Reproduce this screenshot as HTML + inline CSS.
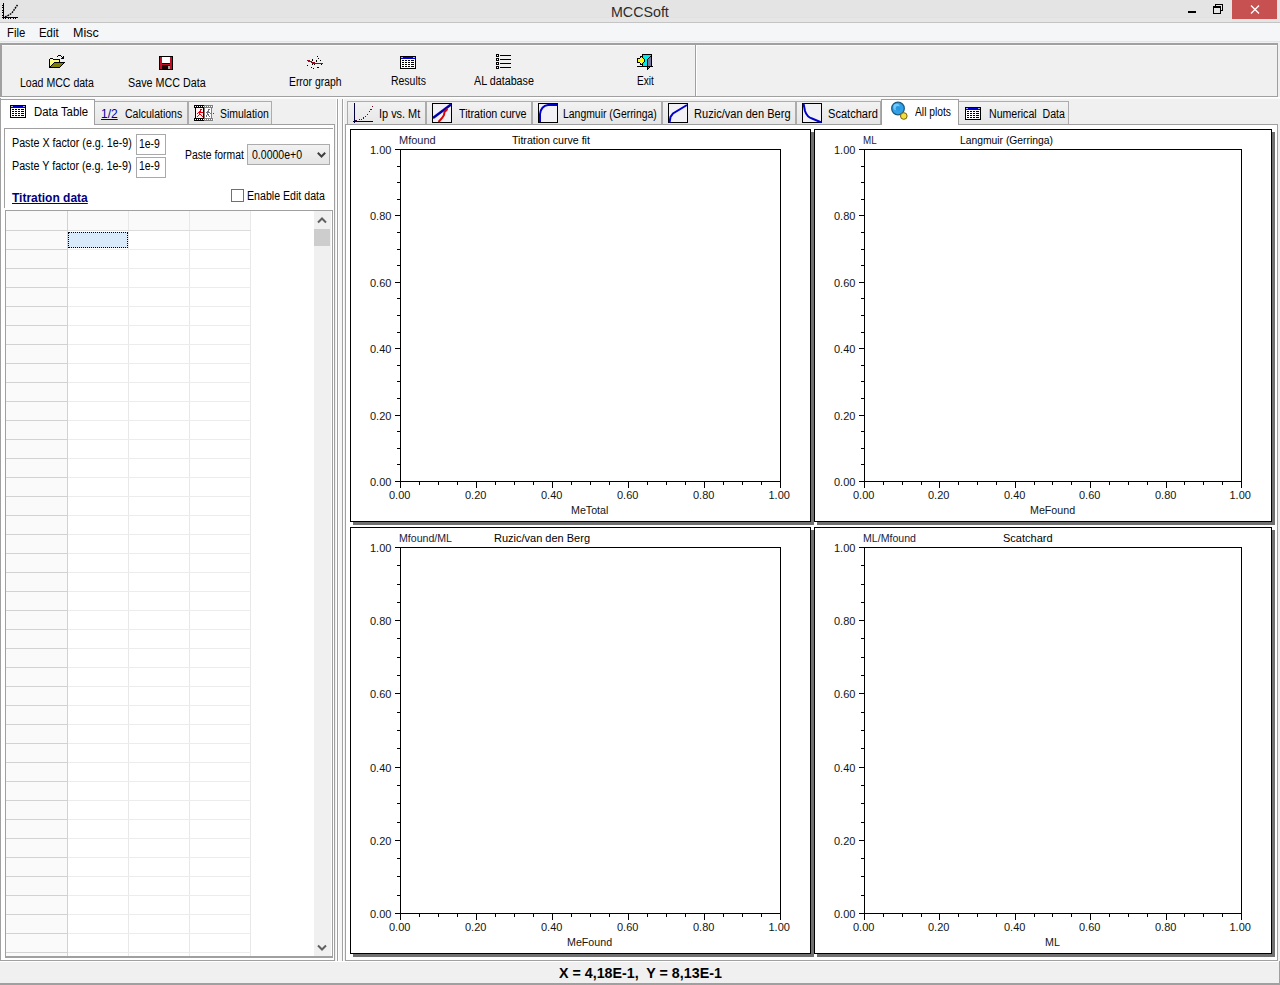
<!DOCTYPE html>
<html><head><meta charset="utf-8"><title>MCCSoft</title>
<style>
html,body{margin:0;padding:0;}
body{width:1280px;height:985px;position:relative;overflow:hidden;background:#f0f0f0;font-family:"Liberation Sans", sans-serif;}
body>div{position:absolute;line-height:20px;white-space:pre;transform-origin:0 0;}
body>svg{position:absolute;}
</style></head><body>
<div style="left:0px;top:0px;width:1280px;height:985px;background:#f0f0f0"></div>
<div style="left:0px;top:0px;width:1280px;height:22px;background:#e4e4e4"></div>
<div style="left:0px;top:17px;width:1232px;height:5px;background:#e6e6e6"></div>
<div style="left:0px;top:17px;width:1232px;height:1px;background:#e1e1e1"></div>
<div style="left:0px;top:22px;width:1280px;height:1px;background:#c4c4c4"></div>
<svg style="left:0px;top:0px" width="22" height="22" viewBox="0 0 22 22" shape-rendering="crispEdges"><rect x="3" y="3" width="1" height="15" fill="#000"/><rect x="3" y="17" width="15" height="1" fill="#000"/><rect x="2" y="5" width="1" height="1" fill="#000"/><rect x="2" y="7" width="1" height="1" fill="#000"/><rect x="2" y="10" width="1" height="1" fill="#000"/><rect x="2" y="12" width="1" height="1" fill="#000"/><rect x="2" y="15" width="1" height="1" fill="#000"/><rect x="2" y="17" width="1" height="1" fill="#000"/><rect x="3" y="18" width="1" height="1" fill="#000"/><rect x="5" y="18" width="1" height="1" fill="#000"/><rect x="8" y="18" width="1" height="1" fill="#000"/><rect x="10" y="18" width="1" height="1" fill="#000"/><rect x="13" y="18" width="1" height="1" fill="#000"/><rect x="15" y="18" width="1" height="1" fill="#000"/><path d="M5 17 L9 15 L12 13 L14 10 L16 7 L17.5 5" stroke="#000" stroke-width="1.4" stroke-dasharray="1.8 0.9" fill="none" shape-rendering="auto"/></svg>
<div style="left:611.05px;top:2px;font-size:15px;color:#2b2b2b;transform:scaleX(0.9500);">MCCSoft</div>
<div style="left:1188px;top:11px;width:8px;height:2px;background:#000"></div>
<svg style="left:1212px;top:3px" width="13" height="12" viewBox="0 0 13 12" shape-rendering="crispEdges"><rect x="3" y="1" width="8" height="1" fill="#000"/><rect x="10" y="1" width="1" height="7" fill="#000"/><rect x="9" y="7" width="2" height="1" fill="#000"/><rect x="1" y="3" width="8" height="2" fill="#000"/><rect x="1" y="3" width="1" height="8" fill="#000"/><rect x="8" y="3" width="1" height="8" fill="#000"/><rect x="1" y="10" width="8" height="1" fill="#000"/><rect x="3" y="1" width="1" height="2" fill="#000"/></svg>
<div style="left:1232px;top:0px;width:45px;height:19px;background:#c75050"></div>
<svg style="left:1250px;top:5px" width="10" height="9" viewBox="0 0 10 9"><path d="M1 0.5 L9 8.5 M9 0.5 L1 8.5" stroke="#fff" stroke-width="1.4" fill="none"/></svg>
<div style="left:0px;top:23px;width:1280px;height:18px;background:#f5f6f7"></div>
<div style="left:0px;top:41px;width:1280px;height:1px;background:#e4e4e4"></div>
<div style="left:0px;top:42px;width:1280px;height:1px;background:#f0f0f0"></div>
<div style="left:7.06px;top:23px;font-size:12px;color:#000;transform:scaleX(0.9444);">File</div>
<div style="left:39.05px;top:23px;font-size:12px;color:#000;transform:scaleX(0.9500);">Edit</div>
<div style="left:72.96px;top:23px;font-size:12px;color:#000;transform:scaleX(1.0435);">Misc</div>
<div style="left:0px;top:43px;width:1278px;height:2px;background:#a0a0a0"></div>
<div style="left:0px;top:43px;width:2px;height:54px;background:#a0a0a0"></div>
<div style="left:2px;top:45px;width:1275px;height:1px;background:#fbfbfb"></div>
<div style="left:0px;top:96px;width:1278px;height:1px;background:#a0a0a0"></div>
<div style="left:1277px;top:43px;width:1px;height:54px;background:#a0a0a0"></div>
<div style="left:695px;top:45px;width:1px;height:51px;background:#a0a0a0"></div>
<div style="left:696px;top:45px;width:1px;height:51px;background:#ffffff"></div>
<div style="left:0px;top:97px;width:1280px;height:1px;background:#ffffff"></div>
<div style="left:0px;top:98px;width:1280px;height:1px;background:#fafafa"></div>
<svg style="left:46px;top:52px" width="20" height="18" viewBox="0 0 20 18" shape-rendering="crispEdges"><path d="M4 7 L7 7 L7 8 L13 8 L13 10 L8 10 L4 14 Z" fill="#ffff80"/><path d="M8 10 L18 10 L14 15 L4 15 Z" fill="#808000"/><rect x="3" y="7" width="1" height="9" fill="#000"/><rect x="4" y="6" width="3" height="1" fill="#000"/><rect x="7" y="7" width="7" height="1" fill="#000"/><rect x="13" y="8" width="1" height="2" fill="#000"/><rect x="8" y="10" width="11" height="1" fill="#000"/><rect x="7" y="11" width="1" height="1" fill="#000"/><rect x="6" y="12" width="1" height="1" fill="#000"/><rect x="5" y="13" width="1" height="1" fill="#000"/><rect x="4" y="14" width="1" height="1" fill="#000"/><rect x="17" y="11" width="1" height="1" fill="#000"/><rect x="16" y="12" width="1" height="1" fill="#000"/><rect x="15" y="13" width="1" height="1" fill="#000"/><rect x="14" y="14" width="1" height="1" fill="#000"/><rect x="3" y="15" width="11" height="1" fill="#000"/><rect x="11" y="4" width="1" height="1" fill="#000"/><rect x="12" y="3" width="1" height="1" fill="#000"/><rect x="13" y="3" width="1" height="1" fill="#000"/><rect x="14" y="3" width="1" height="1" fill="#000"/><rect x="15" y="4" width="1" height="1" fill="#000"/><rect x="16" y="5" width="1" height="1" fill="#000"/><rect x="17" y="4" width="1" height="1" fill="#000"/><rect x="17" y="5" width="1" height="1" fill="#000"/><rect x="17" y="6" width="1" height="1" fill="#000"/><rect x="15" y="6" width="1" height="1" fill="#000"/><rect x="16" y="6" width="1" height="1" fill="#000"/></svg>
<svg style="left:159px;top:56px" width="14" height="14" viewBox="0 0 14 14" shape-rendering="crispEdges"><rect x="0" y="0" width="14" height="14" fill="#000"/><rect x="1" y="1" width="12" height="12" fill="#c01028"/><rect x="3" y="1" width="8" height="6" fill="#fff"/><rect x="3" y="7" width="8" height="1" fill="#000"/><rect x="3" y="9" width="8" height="4" fill="#200000"/><rect x="9" y="10" width="2" height="3" fill="#a0b0a0"/></svg>
<svg style="left:303px;top:52px" width="22" height="18" viewBox="0 0 22 18" shape-rendering="crispEdges"><rect x="4" y="8" width="3" height="1" fill="#b00020"/><rect x="5" y="9" width="4" height="1" fill="#b00020"/><rect x="8" y="10" width="4" height="1" fill="#900010"/><rect x="9" y="11" width="11" height="1" fill="#a00018"/><rect x="9" y="12" width="1" height="1" fill="#000"/><rect x="11" y="12" width="1" height="1" fill="#000"/><rect x="18" y="12" width="1" height="1" fill="#000"/><rect x="14" y="4" width="1" height="1" fill="#000"/><rect x="15" y="6" width="1" height="1" fill="#000"/><rect x="17" y="8" width="1" height="1" fill="#000"/><rect x="9" y="7" width="1" height="1" fill="#000"/><rect x="9" y="8" width="1" height="1" fill="#000"/><rect x="13" y="8" width="1" height="1" fill="#000"/><rect x="13" y="9" width="1" height="1" fill="#000"/><rect x="4" y="13" width="1" height="1" fill="#000"/><rect x="8" y="15" width="1" height="1" fill="#000"/><rect x="10" y="16" width="1" height="1" fill="#000"/><rect x="14" y="15" width="1" height="1" fill="#000"/><rect x="15" y="15" width="1" height="1" fill="#000"/></svg>
<svg style="left:400px;top:56px" width="16" height="13" viewBox="0 0 16 13" shape-rendering="crispEdges"><rect x="0" y="0" width="16" height="13" fill="#000"/><rect x="1" y="1" width="14" height="11" fill="#fff"/><rect x="1" y="1" width="14" height="2" fill="#0000d8"/><rect x="1" y="1" width="2" height="1" fill="#b0b0ff"/><rect x="13" y="1" width="2" height="1" fill="#b0b0ff"/><rect x="2" y="4" width="2" height="1" fill="#000"/><rect x="5" y="4" width="2" height="1" fill="#000"/><rect x="8" y="4" width="2" height="1" fill="#000"/><rect x="11" y="4" width="3" height="1" fill="#000"/><rect x="2" y="6" width="2" height="1" fill="#000"/><rect x="5" y="6" width="2" height="1" fill="#000"/><rect x="8" y="6" width="2" height="1" fill="#000"/><rect x="11" y="6" width="3" height="1" fill="#000"/><rect x="2" y="8" width="2" height="1" fill="#000"/><rect x="5" y="8" width="2" height="1" fill="#000"/><rect x="8" y="8" width="2" height="1" fill="#000"/><rect x="11" y="8" width="3" height="1" fill="#000"/><rect x="2" y="10" width="2" height="1" fill="#000"/><rect x="5" y="10" width="2" height="1" fill="#000"/><rect x="8" y="10" width="2" height="1" fill="#000"/><rect x="11" y="10" width="3" height="1" fill="#000"/></svg>
<svg style="left:496px;top:54px" width="15" height="15" viewBox="0 0 15 15" shape-rendering="crispEdges"><rect x="0" y="0" width="3" height="3" fill="#000"/><rect x="1" y="1" width="1" height="1" fill="#fff"/><rect x="4" y="1" width="11" height="1" fill="#000"/><rect x="0" y="4" width="3" height="3" fill="#000"/><rect x="1" y="5" width="1" height="1" fill="#fff"/><rect x="4" y="5" width="11" height="1" fill="#000"/><rect x="0" y="8" width="3" height="3" fill="#000"/><rect x="1" y="9" width="1" height="1" fill="#fff"/><rect x="4" y="9" width="11" height="1" fill="#000"/><rect x="0" y="12" width="3" height="3" fill="#000"/><rect x="1" y="13" width="1" height="1" fill="#fff"/><rect x="4" y="13" width="11" height="1" fill="#000"/></svg>
<svg style="left:637px;top:54px" width="17" height="17" viewBox="0 0 17 17" shape-rendering="crispEdges"><rect x="5" y="0" width="10" height="1" fill="#000"/><rect x="5" y="0" width="1" height="12" fill="#000"/><rect x="14" y="0" width="1" height="12" fill="#000"/><rect x="6" y="1" width="8" height="11" fill="#00e8e8"/><path d="M10 5 L14 1 L14 12 L10 15.5 Z" fill="#7878a0"/><rect x="10" y="5" width="1" height="1" fill="#000"/><rect x="11" y="4" width="1" height="1" fill="#000"/><rect x="12" y="3" width="1" height="1" fill="#000"/><rect x="13" y="2" width="1" height="1" fill="#000"/><rect x="10" y="6" width="1" height="1" fill="#000"/><rect x="10" y="7" width="1" height="1" fill="#000"/><rect x="10" y="8" width="1" height="1" fill="#000"/><rect x="10" y="9" width="1" height="1" fill="#000"/><rect x="10" y="10" width="1" height="1" fill="#000"/><rect x="10" y="11" width="1" height="1" fill="#000"/><rect x="10" y="12" width="1" height="1" fill="#000"/><rect x="10" y="13" width="1" height="1" fill="#000"/><rect x="10" y="14" width="1" height="1" fill="#000"/><rect x="10" y="15" width="1" height="1" fill="#000"/><rect x="11" y="14" width="1" height="1" fill="#000"/><rect x="12" y="13" width="1" height="1" fill="#000"/><rect x="13" y="12" width="1" height="1" fill="#000"/><rect x="0" y="12" width="16" height="1" fill="#000"/><rect x="1" y="5" width="3" height="3" fill="#ffff00"/><rect x="4" y="3" width="1" height="7" fill="#ffff00"/><rect x="5" y="4" width="1" height="5" fill="#ffff00"/><rect x="6" y="5" width="1" height="3" fill="#ffff00"/><rect x="0" y="4" width="3" height="1" fill="#000"/><rect x="0" y="8" width="3" height="1" fill="#000"/><rect x="0" y="4" width="1" height="5" fill="#000"/><rect x="3" y="2" width="1" height="2" fill="#000"/><rect x="3" y="9" width="1" height="2" fill="#000"/><rect x="4" y="2" width="1" height="1" fill="#000"/><rect x="5" y="3" width="1" height="1" fill="#000"/><rect x="6" y="4" width="1" height="1" fill="#000"/><rect x="7" y="5" width="1" height="1" fill="#000"/><rect x="7" y="6" width="1" height="1" fill="#000"/><rect x="7" y="7" width="1" height="1" fill="#000"/><rect x="6" y="8" width="1" height="1" fill="#000"/><rect x="5" y="9" width="1" height="1" fill="#000"/><rect x="4" y="10" width="1" height="1" fill="#000"/></svg>
<div style="left:20.12px;top:73px;font-size:12px;color:#000;transform:scaleX(0.8795);">Load MCC data</div>
<div style="left:128.10px;top:73px;font-size:12px;color:#000;transform:scaleX(0.8953);">Save MCC Data</div>
<div style="left:289.14px;top:72px;font-size:12px;color:#000;transform:scaleX(0.8644);">Error graph</div>
<div style="left:391.13px;top:71px;font-size:12px;color:#000;transform:scaleX(0.8718);">Results</div>
<div style="left:474.00px;top:71px;font-size:12px;color:#000;transform:scaleX(0.8955);">AL database</div>
<div style="left:637.16px;top:71px;font-size:12px;color:#000;transform:scaleX(0.8421);">Exit</div>
<div style="left:0px;top:98px;width:1px;height:863px;background:#a0a0a0"></div>
<div style="left:1px;top:125px;width:333px;height:835px;background:#ffffff"></div>
<div style="left:1px;top:124px;width:334px;height:1px;background:#a0a0a0"></div>
<div style="left:334px;top:124px;width:1px;height:837px;background:#a0a0a0"></div>
<div style="left:0px;top:960px;width:335px;height:1px;background:#a0a0a0"></div>
<div style="left:94px;top:101px;width:94px;height:23px;background:linear-gradient(#f3f3f3,#e6e6e6)"></div>
<div style="left:94px;top:101px;width:94px;height:1px;background:#acacac"></div>
<div style="left:94px;top:101px;width:1px;height:23px;background:#acacac"></div>
<div style="left:187px;top:101px;width:1px;height:23px;background:#acacac"></div>
<div style="left:188px;top:101px;width:84px;height:23px;background:linear-gradient(#f3f3f3,#e6e6e6)"></div>
<div style="left:188px;top:101px;width:84px;height:1px;background:#acacac"></div>
<div style="left:188px;top:101px;width:1px;height:23px;background:#acacac"></div>
<div style="left:271px;top:101px;width:1px;height:23px;background:#acacac"></div>
<div style="left:0px;top:99px;width:95px;height:26px;background:#ffffff"></div>
<div style="left:0px;top:99px;width:95px;height:1px;background:#a0a0a0"></div>
<div style="left:0px;top:99px;width:1px;height:26px;background:#a0a0a0"></div>
<div style="left:94px;top:99px;width:1px;height:26px;background:#a0a0a0"></div>
<div style="left:1px;top:124px;width:93px;height:1px;background:#ffffff"></div>
<svg style="left:10px;top:105px" width="16" height="13" viewBox="0 0 16 13" shape-rendering="crispEdges"><rect x="0" y="0" width="16" height="13" fill="#000"/><rect x="1" y="1" width="14" height="11" fill="#fff"/><rect x="1" y="1" width="14" height="2" fill="#0000d8"/><rect x="1" y="1" width="2" height="1" fill="#b0b0ff"/><rect x="13" y="1" width="2" height="1" fill="#b0b0ff"/><rect x="2" y="4" width="2" height="1" fill="#000"/><rect x="5" y="4" width="2" height="1" fill="#000"/><rect x="8" y="4" width="2" height="1" fill="#000"/><rect x="11" y="4" width="3" height="1" fill="#000"/><rect x="2" y="6" width="2" height="1" fill="#000"/><rect x="5" y="6" width="2" height="1" fill="#000"/><rect x="8" y="6" width="2" height="1" fill="#000"/><rect x="11" y="6" width="3" height="1" fill="#000"/><rect x="2" y="8" width="2" height="1" fill="#000"/><rect x="5" y="8" width="2" height="1" fill="#000"/><rect x="8" y="8" width="2" height="1" fill="#000"/><rect x="11" y="8" width="3" height="1" fill="#000"/><rect x="2" y="10" width="2" height="1" fill="#000"/><rect x="5" y="10" width="2" height="1" fill="#000"/><rect x="8" y="10" width="2" height="1" fill="#000"/><rect x="11" y="10" width="3" height="1" fill="#000"/></svg>
<div style="left:34.05px;top:102px;font-size:12px;color:#000;transform:scaleX(0.9464);">Data Table</div>
<div style="left:101.00px;top:104px;font-size:12px;color:#0000a0;"><u>1/2</u></div>
<div style="left:125.12px;top:104px;font-size:12px;color:#000;transform:scaleX(0.8750);">Calculations</div>
<svg style="left:194px;top:105px" width="20" height="16" viewBox="0 0 20 16" shape-rendering="crispEdges"><rect x="0" y="0" width="10" height="3" fill="#000"/><rect x="0" y="13" width="10" height="3" fill="#000"/><rect x="10" y="0" width="9" height="3" fill="#808080"/><rect x="10" y="13" width="9" height="3" fill="#808080"/><rect x="1" y="3" width="1" height="10" fill="#000"/><rect x="9" y="3" width="1" height="10" fill="#000"/><rect x="10" y="3" width="1" height="10" fill="#808080"/><rect x="17" y="3" width="1" height="10" fill="#808080"/><rect x="2" y="3" width="7" height="10" fill="#fff0f0"/><rect x="11" y="3" width="6" height="10" fill="#fff"/><rect x="1" y="1" width="1" height="1" fill="#fff"/><rect x="1" y="14" width="1" height="1" fill="#fff"/><rect x="3" y="1" width="1" height="1" fill="#fff"/><rect x="3" y="14" width="1" height="1" fill="#fff"/><rect x="5" y="1" width="1" height="1" fill="#fff"/><rect x="5" y="14" width="1" height="1" fill="#fff"/><rect x="7" y="1" width="1" height="1" fill="#fff"/><rect x="7" y="14" width="1" height="1" fill="#fff"/><rect x="9" y="1" width="1" height="1" fill="#fff"/><rect x="9" y="14" width="1" height="1" fill="#fff"/><rect x="11" y="1" width="1" height="1" fill="#fff"/><rect x="11" y="14" width="1" height="1" fill="#fff"/><rect x="13" y="1" width="1" height="1" fill="#fff"/><rect x="13" y="14" width="1" height="1" fill="#fff"/><rect x="15" y="1" width="1" height="1" fill="#fff"/><rect x="15" y="14" width="1" height="1" fill="#fff"/><rect x="17" y="1" width="1" height="1" fill="#fff"/><rect x="17" y="14" width="1" height="1" fill="#fff"/><rect x="19" y="1" width="1" height="1" fill="#fff"/><rect x="19" y="14" width="1" height="1" fill="#fff"/><rect x="6" y="4" width="1" height="1" fill="#e00010"/><rect x="7" y="4" width="1" height="1" fill="#e00010"/><rect x="6" y="5" width="1" height="1" fill="#e00010"/><rect x="5" y="6" width="1" height="1" fill="#e00010"/><rect x="6" y="6" width="1" height="1" fill="#e00010"/><rect x="4" y="7" width="1" height="1" fill="#e00010"/><rect x="5" y="7" width="1" height="1" fill="#e00010"/><rect x="6" y="7" width="1" height="1" fill="#e00010"/><rect x="7" y="7" width="1" height="1" fill="#e00010"/><rect x="3" y="8" width="1" height="1" fill="#e00010"/><rect x="5" y="8" width="1" height="1" fill="#e00010"/><rect x="8" y="7" width="1" height="1" fill="#e00010"/><rect x="5" y="9" width="1" height="1" fill="#e00010"/><rect x="6" y="9" width="1" height="1" fill="#e00010"/><rect x="4" y="10" width="1" height="1" fill="#e00010"/><rect x="7" y="10" width="1" height="1" fill="#e00010"/><rect x="3" y="11" width="1" height="1" fill="#e00010"/><rect x="8" y="11" width="1" height="1" fill="#e00010"/><rect x="14" y="4" width="1" height="1" fill="#707080"/><rect x="15" y="4" width="1" height="1" fill="#707080"/><rect x="14" y="5" width="1" height="1" fill="#707080"/><rect x="13" y="6" width="1" height="1" fill="#707080"/><rect x="14" y="6" width="1" height="1" fill="#707080"/><rect x="12" y="7" width="1" height="1" fill="#707080"/><rect x="13" y="7" width="1" height="1" fill="#707080"/><rect x="14" y="7" width="1" height="1" fill="#707080"/><rect x="15" y="7" width="1" height="1" fill="#707080"/><rect x="13" y="8" width="1" height="1" fill="#707080"/><rect x="16" y="8" width="1" height="1" fill="#707080"/><rect x="13" y="9" width="1" height="1" fill="#707080"/><rect x="14" y="9" width="1" height="1" fill="#707080"/><rect x="12" y="10" width="1" height="1" fill="#707080"/><rect x="14" y="10" width="1" height="1" fill="#707080"/><rect x="12" y="11" width="1" height="1" fill="#707080"/><rect x="15" y="11" width="1" height="1" fill="#707080"/><rect x="19" y="8" width="1" height="1" fill="#404040"/></svg>
<div style="left:220.13px;top:104px;font-size:12px;color:#000;transform:scaleX(0.8704);">Simulation</div>
<div style="left:4px;top:128px;width:329px;height:1px;background:#a0a0a0"></div>
<div style="left:4px;top:128px;width:1px;height:80px;background:#a0a0a0"></div>
<div style="left:12.11px;top:133px;font-size:12px;color:#000;transform:scaleX(0.8939);">Paste X factor (e.g. 1e-9)</div>
<div style="left:12.11px;top:156px;font-size:12px;color:#000;transform:scaleX(0.8939);">Paste Y factor (e.g. 1e-9)</div>
<div style="left:136px;top:134px;width:30px;height:21px;background:#fff;border:1px solid #a9a9a9;box-sizing:border-box"></div>
<div style="left:136px;top:157px;width:30px;height:21px;background:#fff;border:1px solid #a9a9a9;box-sizing:border-box"></div>
<div style="left:139.13px;top:134px;font-size:12px;color:#000;transform:scaleX(0.8696);">1e-9</div>
<div style="left:139.13px;top:156px;font-size:12px;color:#000;transform:scaleX(0.8696);">1e-9</div>
<div style="left:185.13px;top:145px;font-size:12px;color:#000;transform:scaleX(0.8657);">Paste format</div>
<div style="left:247px;top:144px;width:83px;height:21px;background:linear-gradient(#f2f2f2,#e5e5e5);border:1px solid #acacac;box-sizing:border-box"></div>
<div style="left:252.00px;top:145px;font-size:12px;color:#000;transform:scaleX(0.8772);">0.0000e+0</div>
<svg style="left:317px;top:152px" width="9" height="6" viewBox="0 0 9 6"><path d="M0.8 0.8 L4.5 4.5 L8.2 0.8" stroke="#404040" stroke-width="2" fill="none"/></svg>
<div style="left:231px;top:189px;width:13px;height:13px;background:#fff;border:1px solid #707070;box-sizing:border-box"></div>
<div style="left:247.11px;top:186px;font-size:12px;color:#000;transform:scaleX(0.8851);">Enable Edit data</div>
<div style="left:12.00px;top:188px;font-size:12px;font-weight:bold;color:#000080;text-decoration:underline;">Titration data</div>
<div style="left:5px;top:210px;width:328px;height:749px;background:#ffffff"></div>
<div style="left:5px;top:210px;width:328px;height:1px;background:#a0a0a0"></div>
<div style="left:5px;top:210px;width:1px;height:748px;background:#a0a0a0"></div>
<div style="left:5px;top:956px;width:328px;height:2px;background:#a0a0a0"></div>
<div style="left:332px;top:210px;width:1px;height:748px;background:#a0a0a0"></div>
<div style="left:6px;top:211px;width:245px;height:19px;background:#fafafa"></div>
<div style="left:6px;top:231px;width:61px;height:725px;background:#fafafa"></div>
<div style="left:128px;top:211px;width:1px;height:745px;background:#e8e8e8"></div>
<div style="left:189px;top:211px;width:1px;height:745px;background:#e8e8e8"></div>
<div style="left:250px;top:211px;width:1px;height:745px;background:#e8e8e8"></div>
<div style="left:68px;top:230px;width:183px;height:1px;background:#ececec"></div>
<div style="left:6px;top:230px;width:61px;height:1px;background:#d2d2d2"></div>
<div style="left:68px;top:249px;width:183px;height:1px;background:#ececec"></div>
<div style="left:6px;top:249px;width:61px;height:1px;background:#d2d2d2"></div>
<div style="left:68px;top:268px;width:183px;height:1px;background:#ececec"></div>
<div style="left:6px;top:268px;width:61px;height:1px;background:#d2d2d2"></div>
<div style="left:68px;top:287px;width:183px;height:1px;background:#ececec"></div>
<div style="left:6px;top:287px;width:61px;height:1px;background:#d2d2d2"></div>
<div style="left:68px;top:306px;width:183px;height:1px;background:#ececec"></div>
<div style="left:6px;top:306px;width:61px;height:1px;background:#d2d2d2"></div>
<div style="left:68px;top:325px;width:183px;height:1px;background:#ececec"></div>
<div style="left:6px;top:325px;width:61px;height:1px;background:#d2d2d2"></div>
<div style="left:68px;top:344px;width:183px;height:1px;background:#ececec"></div>
<div style="left:6px;top:344px;width:61px;height:1px;background:#d2d2d2"></div>
<div style="left:68px;top:363px;width:183px;height:1px;background:#ececec"></div>
<div style="left:6px;top:363px;width:61px;height:1px;background:#d2d2d2"></div>
<div style="left:68px;top:382px;width:183px;height:1px;background:#ececec"></div>
<div style="left:6px;top:382px;width:61px;height:1px;background:#d2d2d2"></div>
<div style="left:68px;top:401px;width:183px;height:1px;background:#ececec"></div>
<div style="left:6px;top:401px;width:61px;height:1px;background:#d2d2d2"></div>
<div style="left:68px;top:420px;width:183px;height:1px;background:#ececec"></div>
<div style="left:6px;top:420px;width:61px;height:1px;background:#d2d2d2"></div>
<div style="left:68px;top:439px;width:183px;height:1px;background:#ececec"></div>
<div style="left:6px;top:439px;width:61px;height:1px;background:#d2d2d2"></div>
<div style="left:68px;top:458px;width:183px;height:1px;background:#ececec"></div>
<div style="left:6px;top:458px;width:61px;height:1px;background:#d2d2d2"></div>
<div style="left:68px;top:477px;width:183px;height:1px;background:#ececec"></div>
<div style="left:6px;top:477px;width:61px;height:1px;background:#d2d2d2"></div>
<div style="left:68px;top:496px;width:183px;height:1px;background:#ececec"></div>
<div style="left:6px;top:496px;width:61px;height:1px;background:#d2d2d2"></div>
<div style="left:68px;top:515px;width:183px;height:1px;background:#ececec"></div>
<div style="left:6px;top:515px;width:61px;height:1px;background:#d2d2d2"></div>
<div style="left:68px;top:534px;width:183px;height:1px;background:#ececec"></div>
<div style="left:6px;top:534px;width:61px;height:1px;background:#d2d2d2"></div>
<div style="left:68px;top:553px;width:183px;height:1px;background:#ececec"></div>
<div style="left:6px;top:553px;width:61px;height:1px;background:#d2d2d2"></div>
<div style="left:68px;top:572px;width:183px;height:1px;background:#ececec"></div>
<div style="left:6px;top:572px;width:61px;height:1px;background:#d2d2d2"></div>
<div style="left:68px;top:591px;width:183px;height:1px;background:#ececec"></div>
<div style="left:6px;top:591px;width:61px;height:1px;background:#d2d2d2"></div>
<div style="left:68px;top:610px;width:183px;height:1px;background:#ececec"></div>
<div style="left:6px;top:610px;width:61px;height:1px;background:#d2d2d2"></div>
<div style="left:68px;top:629px;width:183px;height:1px;background:#ececec"></div>
<div style="left:6px;top:629px;width:61px;height:1px;background:#d2d2d2"></div>
<div style="left:68px;top:648px;width:183px;height:1px;background:#ececec"></div>
<div style="left:6px;top:648px;width:61px;height:1px;background:#d2d2d2"></div>
<div style="left:68px;top:667px;width:183px;height:1px;background:#ececec"></div>
<div style="left:6px;top:667px;width:61px;height:1px;background:#d2d2d2"></div>
<div style="left:68px;top:686px;width:183px;height:1px;background:#ececec"></div>
<div style="left:6px;top:686px;width:61px;height:1px;background:#d2d2d2"></div>
<div style="left:68px;top:705px;width:183px;height:1px;background:#ececec"></div>
<div style="left:6px;top:705px;width:61px;height:1px;background:#d2d2d2"></div>
<div style="left:68px;top:724px;width:183px;height:1px;background:#ececec"></div>
<div style="left:6px;top:724px;width:61px;height:1px;background:#d2d2d2"></div>
<div style="left:68px;top:743px;width:183px;height:1px;background:#ececec"></div>
<div style="left:6px;top:743px;width:61px;height:1px;background:#d2d2d2"></div>
<div style="left:68px;top:762px;width:183px;height:1px;background:#ececec"></div>
<div style="left:6px;top:762px;width:61px;height:1px;background:#d2d2d2"></div>
<div style="left:68px;top:781px;width:183px;height:1px;background:#ececec"></div>
<div style="left:6px;top:781px;width:61px;height:1px;background:#d2d2d2"></div>
<div style="left:68px;top:800px;width:183px;height:1px;background:#ececec"></div>
<div style="left:6px;top:800px;width:61px;height:1px;background:#d2d2d2"></div>
<div style="left:68px;top:819px;width:183px;height:1px;background:#ececec"></div>
<div style="left:6px;top:819px;width:61px;height:1px;background:#d2d2d2"></div>
<div style="left:68px;top:838px;width:183px;height:1px;background:#ececec"></div>
<div style="left:6px;top:838px;width:61px;height:1px;background:#d2d2d2"></div>
<div style="left:68px;top:857px;width:183px;height:1px;background:#ececec"></div>
<div style="left:6px;top:857px;width:61px;height:1px;background:#d2d2d2"></div>
<div style="left:68px;top:876px;width:183px;height:1px;background:#ececec"></div>
<div style="left:6px;top:876px;width:61px;height:1px;background:#d2d2d2"></div>
<div style="left:68px;top:895px;width:183px;height:1px;background:#ececec"></div>
<div style="left:6px;top:895px;width:61px;height:1px;background:#d2d2d2"></div>
<div style="left:68px;top:914px;width:183px;height:1px;background:#ececec"></div>
<div style="left:6px;top:914px;width:61px;height:1px;background:#d2d2d2"></div>
<div style="left:68px;top:933px;width:183px;height:1px;background:#ececec"></div>
<div style="left:6px;top:933px;width:61px;height:1px;background:#d2d2d2"></div>
<div style="left:68px;top:952px;width:183px;height:1px;background:#ececec"></div>
<div style="left:6px;top:952px;width:61px;height:1px;background:#d2d2d2"></div>
<div style="left:67px;top:211px;width:1px;height:745px;background:#d2d2d2"></div>
<div style="left:68px;top:230px;width:183px;height:1px;background:#dcdcdc"></div>
<div style="left:68px;top:232px;width:60px;height:16px;background:#d9ebfb;outline:1px dotted #000;outline-offset:-1px"></div>
<div style="left:314px;top:211px;width:17px;height:745px;background:#f0f0f0"></div>
<svg style="left:317px;top:217px" width="10" height="7" viewBox="0 0 10 7"><path d="M1 5.5 L5 1.5 L9 5.5" stroke="#606060" stroke-width="2" fill="none"/></svg>
<div style="left:314px;top:229px;width:16px;height:17px;background:#cdcdcd"></div>
<svg style="left:317px;top:944px" width="10" height="7" viewBox="0 0 10 7"><path d="M1 1.5 L5 5.5 L9 1.5" stroke="#606060" stroke-width="2" fill="none"/></svg>
<div style="left:335px;top:99px;width:10px;height:863px;background:#f0f0f0"></div>
<div style="left:336px;top:99px;width:1px;height:863px;background:#ffffff"></div>
<div style="left:338px;top:99px;width:1px;height:863px;background:#ffffff"></div>
<div style="left:339px;top:99px;width:3px;height:863px;background:#f7f7f7"></div>
<div style="left:343px;top:99px;width:1px;height:863px;background:#ffffff"></div>
<div style="left:337px;top:99px;width:1px;height:863px;background:#a0a0a0"></div>
<div style="left:342px;top:99px;width:1px;height:863px;background:#a0a0a0"></div>
<div style="left:346px;top:125px;width:931px;height:835px;background:#ffffff"></div>
<div style="left:345px;top:124px;width:933px;height:1px;background:#a0a0a0"></div>
<div style="left:345px;top:124px;width:1px;height:837px;background:#a0a0a0"></div>
<div style="left:1277px;top:124px;width:1px;height:837px;background:#a0a0a0"></div>
<div style="left:345px;top:960px;width:933px;height:1px;background:#a0a0a0"></div>
<div style="left:347px;top:101px;width:79px;height:23px;background:linear-gradient(#f3f3f3,#e6e6e6)"></div>
<div style="left:347px;top:101px;width:79px;height:1px;background:#acacac"></div>
<div style="left:347px;top:101px;width:1px;height:23px;background:#acacac"></div>
<div style="left:425px;top:101px;width:1px;height:23px;background:#acacac"></div>
<div style="left:426px;top:101px;width:106px;height:23px;background:linear-gradient(#f3f3f3,#e6e6e6)"></div>
<div style="left:426px;top:101px;width:106px;height:1px;background:#acacac"></div>
<div style="left:426px;top:101px;width:1px;height:23px;background:#acacac"></div>
<div style="left:531px;top:101px;width:1px;height:23px;background:#acacac"></div>
<div style="left:532px;top:101px;width:130px;height:23px;background:linear-gradient(#f3f3f3,#e6e6e6)"></div>
<div style="left:532px;top:101px;width:130px;height:1px;background:#acacac"></div>
<div style="left:532px;top:101px;width:1px;height:23px;background:#acacac"></div>
<div style="left:661px;top:101px;width:1px;height:23px;background:#acacac"></div>
<div style="left:662px;top:101px;width:134px;height:23px;background:linear-gradient(#f3f3f3,#e6e6e6)"></div>
<div style="left:662px;top:101px;width:134px;height:1px;background:#acacac"></div>
<div style="left:662px;top:101px;width:1px;height:23px;background:#acacac"></div>
<div style="left:795px;top:101px;width:1px;height:23px;background:#acacac"></div>
<div style="left:796px;top:101px;width:85px;height:23px;background:linear-gradient(#f3f3f3,#e6e6e6)"></div>
<div style="left:796px;top:101px;width:85px;height:1px;background:#acacac"></div>
<div style="left:796px;top:101px;width:1px;height:23px;background:#acacac"></div>
<div style="left:880px;top:101px;width:1px;height:23px;background:#acacac"></div>
<div style="left:958px;top:101px;width:111px;height:23px;background:linear-gradient(#f3f3f3,#e6e6e6)"></div>
<div style="left:958px;top:101px;width:111px;height:1px;background:#acacac"></div>
<div style="left:958px;top:101px;width:1px;height:23px;background:#acacac"></div>
<div style="left:1068px;top:101px;width:1px;height:23px;background:#acacac"></div>
<div style="left:881px;top:99px;width:78px;height:26px;background:#ffffff"></div>
<div style="left:881px;top:99px;width:78px;height:1px;background:#a0a0a0"></div>
<div style="left:881px;top:99px;width:1px;height:26px;background:#a0a0a0"></div>
<div style="left:958px;top:99px;width:1px;height:26px;background:#a0a0a0"></div>
<div style="left:882px;top:124px;width:76px;height:1px;background:#ffffff"></div>
<svg style="left:350px;top:101px" width="24" height="23" viewBox="0 0 24 23" shape-rendering="crispEdges"><rect x="4" y="2" width="1" height="20" fill="#000040"/><rect x="3" y="20" width="20" height="1" fill="#000040"/><rect x="5" y="19" width="2" height="1" fill="#400030"/><rect x="9" y="18" width="1" height="1" fill="#700020"/><rect x="11" y="18" width="1" height="1" fill="#700020"/><rect x="13" y="16" width="1" height="1" fill="#700020"/><rect x="13" y="17" width="1" height="1" fill="#700020"/><rect x="15" y="15" width="1" height="1" fill="#700020"/><rect x="17" y="13" width="1" height="1" fill="#700020"/><rect x="19" y="10" width="1" height="1" fill="#700020"/><rect x="20" y="8" width="1" height="1" fill="#700020"/><rect x="21" y="8" width="1" height="1" fill="#700020"/><rect x="22" y="5" width="1" height="1" fill="#700020"/></svg>
<div style="left:379.09px;top:104px;font-size:12px;color:#000;transform:scaleX(0.9091);">Ip vs. Mt</div>
<svg style="left:432px;top:103px" width="20" height="20" viewBox="0 0 20 20"><rect x="0.5" y="0.5" width="19" height="19" fill="#f2f2f6" stroke="#000"/><path d="M1 15 L19 1.5" stroke="#0000b0" stroke-width="2.5" fill="none"/><path d="M6.5 19 L10.5 14.5 L12 12 L12.5 9 L15.5 6" stroke="#e00000" stroke-width="2" fill="none"/></svg>
<div style="left:459.00px;top:104px;font-size:12px;color:#000;transform:scaleX(0.8933);">Titration curve</div>
<svg style="left:538px;top:103px" width="20" height="20" viewBox="0 0 20 20"><rect x="0.5" y="0.5" width="19" height="19" fill="#f2f2f6" stroke="#000"/><path d="M2 19 L2 11 Q3 3 10 2 L19 2" stroke="#0000d0" stroke-width="2" fill="none"/></svg>
<div style="left:563.13px;top:104px;font-size:12px;color:#000;transform:scaleX(0.8679);">Langmuir (Gerringa)</div>
<svg style="left:668px;top:103px" width="20" height="20" viewBox="0 0 20 20"><rect x="0.5" y="0.5" width="19" height="19" fill="#f2f2f6" stroke="#000"/><path d="M1.5 19.5 L2.5 14 L5 10.5 L19 2" stroke="#0000d0" stroke-width="2" fill="none"/></svg>
<div style="left:694.08px;top:104px;font-size:12px;color:#000;transform:scaleX(0.9223);">Ruzic/van den Berg</div>
<svg style="left:802px;top:103px" width="20" height="20" viewBox="0 0 20 20"><rect x="0.5" y="0.5" width="19" height="19" fill="#f2f2f6" stroke="#000"/><path d="M1.5 0.5 L3 8 Q5 14 10 15.5 L19.5 19.5" stroke="#0000d0" stroke-width="2" fill="none"/></svg>
<div style="left:828.08px;top:104px;font-size:12px;color:#000;transform:scaleX(0.9231);">Scatchard</div>
<svg style="left:886px;top:99px" width="24" height="24" viewBox="0 0 24 24"><circle cx="12" cy="9.5" r="6.3" fill="#30a0e8" stroke="#1a5a80" stroke-width="1.3"/><circle cx="10.5" cy="8" r="3.2" fill="#70c8ff"/><circle cx="12" cy="9.5" r="2.4" fill="#2898e0"/><circle cx="17.8" cy="17" r="3.3" fill="#f0e040" stroke="#806000" stroke-width="1"/></svg>
<div style="left:915.00px;top:102px;font-size:12px;color:#000;transform:scaleX(0.8571);">All plots</div>
<svg style="left:965px;top:107px" width="16" height="13" viewBox="0 0 16 13" shape-rendering="crispEdges"><rect x="0" y="0" width="16" height="13" fill="#000"/><rect x="1" y="1" width="14" height="11" fill="#fff"/><rect x="1" y="1" width="14" height="2" fill="#0000d8"/><rect x="1" y="1" width="2" height="1" fill="#b0b0ff"/><rect x="13" y="1" width="2" height="1" fill="#b0b0ff"/><rect x="2" y="4" width="2" height="1" fill="#000"/><rect x="5" y="4" width="2" height="1" fill="#000"/><rect x="8" y="4" width="2" height="1" fill="#000"/><rect x="11" y="4" width="3" height="1" fill="#000"/><rect x="2" y="6" width="2" height="1" fill="#000"/><rect x="5" y="6" width="2" height="1" fill="#000"/><rect x="8" y="6" width="2" height="1" fill="#000"/><rect x="11" y="6" width="3" height="1" fill="#000"/><rect x="2" y="8" width="2" height="1" fill="#000"/><rect x="5" y="8" width="2" height="1" fill="#000"/><rect x="8" y="8" width="2" height="1" fill="#000"/><rect x="11" y="8" width="3" height="1" fill="#000"/><rect x="2" y="10" width="2" height="1" fill="#000"/><rect x="5" y="10" width="2" height="1" fill="#000"/><rect x="8" y="10" width="2" height="1" fill="#000"/><rect x="11" y="10" width="3" height="1" fill="#000"/></svg>
<div style="left:989.12px;top:104px;font-size:12px;color:#000;transform:scaleX(0.8824);">Numerical  Data</div>
<div style="left:350px;top:129px;width:461px;height:393px;background:#000"></div>
<div style="left:351px;top:130px;width:459px;height:391px;background:#fff"></div>
<div style="left:811px;top:132px;width:3px;height:393px;background:#707070"></div>
<div style="left:353px;top:522px;width:461px;height:3px;background:#707070"></div>
<div style="left:395px;top:149px;width:386px;height:1px;background:#000"></div>
<div style="left:400px;top:149px;width:1px;height:339px;background:#000"></div>
<div style="left:780px;top:149px;width:1px;height:339px;background:#000"></div>
<div style="left:395px;top:481px;width:386px;height:1px;background:#000"></div>
<div style="left:400px;top:481px;width:1px;height:7px;background:#000"></div>
<div style="left:395px;top:481px;width:6px;height:1px;background:#000"></div>
<div style="left:419px;top:481px;width:1px;height:4px;background:#000"></div>
<div style="left:397px;top:464px;width:4px;height:1px;background:#000"></div>
<div style="left:438px;top:481px;width:1px;height:4px;background:#000"></div>
<div style="left:397px;top:448px;width:4px;height:1px;background:#000"></div>
<div style="left:457px;top:481px;width:1px;height:4px;background:#000"></div>
<div style="left:397px;top:431px;width:4px;height:1px;background:#000"></div>
<div style="left:476px;top:481px;width:1px;height:7px;background:#000"></div>
<div style="left:395px;top:415px;width:6px;height:1px;background:#000"></div>
<div style="left:495px;top:481px;width:1px;height:4px;background:#000"></div>
<div style="left:397px;top:398px;width:4px;height:1px;background:#000"></div>
<div style="left:514px;top:481px;width:1px;height:4px;background:#000"></div>
<div style="left:397px;top:381px;width:4px;height:1px;background:#000"></div>
<div style="left:533px;top:481px;width:1px;height:4px;background:#000"></div>
<div style="left:397px;top:365px;width:4px;height:1px;background:#000"></div>
<div style="left:552px;top:481px;width:1px;height:7px;background:#000"></div>
<div style="left:395px;top:348px;width:6px;height:1px;background:#000"></div>
<div style="left:571px;top:481px;width:1px;height:4px;background:#000"></div>
<div style="left:397px;top:332px;width:4px;height:1px;background:#000"></div>
<div style="left:590px;top:481px;width:1px;height:4px;background:#000"></div>
<div style="left:397px;top:315px;width:4px;height:1px;background:#000"></div>
<div style="left:609px;top:481px;width:1px;height:4px;background:#000"></div>
<div style="left:397px;top:298px;width:4px;height:1px;background:#000"></div>
<div style="left:628px;top:481px;width:1px;height:7px;background:#000"></div>
<div style="left:395px;top:282px;width:6px;height:1px;background:#000"></div>
<div style="left:647px;top:481px;width:1px;height:4px;background:#000"></div>
<div style="left:397px;top:265px;width:4px;height:1px;background:#000"></div>
<div style="left:666px;top:481px;width:1px;height:4px;background:#000"></div>
<div style="left:397px;top:249px;width:4px;height:1px;background:#000"></div>
<div style="left:685px;top:481px;width:1px;height:4px;background:#000"></div>
<div style="left:397px;top:232px;width:4px;height:1px;background:#000"></div>
<div style="left:704px;top:481px;width:1px;height:7px;background:#000"></div>
<div style="left:395px;top:215px;width:6px;height:1px;background:#000"></div>
<div style="left:723px;top:481px;width:1px;height:4px;background:#000"></div>
<div style="left:397px;top:199px;width:4px;height:1px;background:#000"></div>
<div style="left:742px;top:481px;width:1px;height:4px;background:#000"></div>
<div style="left:397px;top:182px;width:4px;height:1px;background:#000"></div>
<div style="left:761px;top:481px;width:1px;height:4px;background:#000"></div>
<div style="left:397px;top:166px;width:4px;height:1px;background:#000"></div>
<div style="left:780px;top:481px;width:1px;height:7px;background:#000"></div>
<div style="left:395px;top:149px;width:6px;height:1px;background:#000"></div>
<div style="left:389.00px;top:485px;font-size:11px;color:#141414;">0.00</div>
<div style="left:370.00px;top:472px;font-size:11px;color:#141414;">0.00</div>
<div style="left:465.00px;top:485px;font-size:11px;color:#141414;">0.20</div>
<div style="left:370.00px;top:406px;font-size:11px;color:#141414;">0.20</div>
<div style="left:541.00px;top:485px;font-size:11px;color:#141414;">0.40</div>
<div style="left:370.00px;top:339px;font-size:11px;color:#141414;">0.40</div>
<div style="left:617.00px;top:485px;font-size:11px;color:#141414;">0.60</div>
<div style="left:370.00px;top:273px;font-size:11px;color:#141414;">0.60</div>
<div style="left:693.00px;top:485px;font-size:11px;color:#141414;">0.80</div>
<div style="left:370.00px;top:206px;font-size:11px;color:#141414;">0.80</div>
<div style="left:768.50px;top:485px;font-size:11px;color:#141414;">1.00</div>
<div style="left:370.00px;top:140px;font-size:11px;color:#141414;">1.00</div>
<div style="left:399.00px;top:130px;font-size:11px;color:#1c1c3c;">Mfound</div>
<div style="left:512.00px;top:130px;font-size:11px;color:#000;transform:scaleX(0.9630);">Titration curve fit</div>
<div style="left:571.08px;top:500px;font-size:11px;color:#141414;transform:scaleX(0.9700);">MeTotal</div>
<div style="left:814px;top:129px;width:458px;height:393px;background:#000"></div>
<div style="left:815px;top:130px;width:456px;height:391px;background:#fff"></div>
<div style="left:1272px;top:132px;width:3px;height:393px;background:#707070"></div>
<div style="left:817px;top:522px;width:458px;height:3px;background:#707070"></div>
<div style="left:859px;top:149px;width:383px;height:1px;background:#000"></div>
<div style="left:864px;top:149px;width:1px;height:339px;background:#000"></div>
<div style="left:1241px;top:149px;width:1px;height:339px;background:#000"></div>
<div style="left:859px;top:481px;width:383px;height:1px;background:#000"></div>
<div style="left:864px;top:481px;width:1px;height:7px;background:#000"></div>
<div style="left:859px;top:481px;width:6px;height:1px;background:#000"></div>
<div style="left:883px;top:481px;width:1px;height:4px;background:#000"></div>
<div style="left:861px;top:464px;width:4px;height:1px;background:#000"></div>
<div style="left:902px;top:481px;width:1px;height:4px;background:#000"></div>
<div style="left:861px;top:448px;width:4px;height:1px;background:#000"></div>
<div style="left:921px;top:481px;width:1px;height:4px;background:#000"></div>
<div style="left:861px;top:431px;width:4px;height:1px;background:#000"></div>
<div style="left:939px;top:481px;width:1px;height:7px;background:#000"></div>
<div style="left:859px;top:415px;width:6px;height:1px;background:#000"></div>
<div style="left:958px;top:481px;width:1px;height:4px;background:#000"></div>
<div style="left:861px;top:398px;width:4px;height:1px;background:#000"></div>
<div style="left:977px;top:481px;width:1px;height:4px;background:#000"></div>
<div style="left:861px;top:381px;width:4px;height:1px;background:#000"></div>
<div style="left:996px;top:481px;width:1px;height:4px;background:#000"></div>
<div style="left:861px;top:365px;width:4px;height:1px;background:#000"></div>
<div style="left:1015px;top:481px;width:1px;height:7px;background:#000"></div>
<div style="left:859px;top:348px;width:6px;height:1px;background:#000"></div>
<div style="left:1034px;top:481px;width:1px;height:4px;background:#000"></div>
<div style="left:861px;top:332px;width:4px;height:1px;background:#000"></div>
<div style="left:1052px;top:481px;width:1px;height:4px;background:#000"></div>
<div style="left:861px;top:315px;width:4px;height:1px;background:#000"></div>
<div style="left:1071px;top:481px;width:1px;height:4px;background:#000"></div>
<div style="left:861px;top:298px;width:4px;height:1px;background:#000"></div>
<div style="left:1090px;top:481px;width:1px;height:7px;background:#000"></div>
<div style="left:859px;top:282px;width:6px;height:1px;background:#000"></div>
<div style="left:1109px;top:481px;width:1px;height:4px;background:#000"></div>
<div style="left:861px;top:265px;width:4px;height:1px;background:#000"></div>
<div style="left:1128px;top:481px;width:1px;height:4px;background:#000"></div>
<div style="left:861px;top:249px;width:4px;height:1px;background:#000"></div>
<div style="left:1147px;top:481px;width:1px;height:4px;background:#000"></div>
<div style="left:861px;top:232px;width:4px;height:1px;background:#000"></div>
<div style="left:1166px;top:481px;width:1px;height:7px;background:#000"></div>
<div style="left:859px;top:215px;width:6px;height:1px;background:#000"></div>
<div style="left:1184px;top:481px;width:1px;height:4px;background:#000"></div>
<div style="left:861px;top:199px;width:4px;height:1px;background:#000"></div>
<div style="left:1203px;top:481px;width:1px;height:4px;background:#000"></div>
<div style="left:861px;top:182px;width:4px;height:1px;background:#000"></div>
<div style="left:1222px;top:481px;width:1px;height:4px;background:#000"></div>
<div style="left:861px;top:166px;width:4px;height:1px;background:#000"></div>
<div style="left:1241px;top:481px;width:1px;height:7px;background:#000"></div>
<div style="left:859px;top:149px;width:6px;height:1px;background:#000"></div>
<div style="left:853.00px;top:485px;font-size:11px;color:#141414;">0.00</div>
<div style="left:834.00px;top:472px;font-size:11px;color:#141414;">0.00</div>
<div style="left:928.00px;top:485px;font-size:11px;color:#141414;">0.20</div>
<div style="left:834.00px;top:406px;font-size:11px;color:#141414;">0.20</div>
<div style="left:1004.00px;top:485px;font-size:11px;color:#141414;">0.40</div>
<div style="left:834.00px;top:339px;font-size:11px;color:#141414;">0.40</div>
<div style="left:1079.00px;top:485px;font-size:11px;color:#141414;">0.60</div>
<div style="left:834.00px;top:273px;font-size:11px;color:#141414;">0.60</div>
<div style="left:1155.00px;top:485px;font-size:11px;color:#141414;">0.80</div>
<div style="left:834.00px;top:206px;font-size:11px;color:#141414;">0.80</div>
<div style="left:1229.50px;top:485px;font-size:11px;color:#141414;">1.00</div>
<div style="left:834.00px;top:140px;font-size:11px;color:#141414;">1.00</div>
<div style="left:863.11px;top:130px;font-size:11px;color:#1c1c3c;transform:scaleX(0.8929);">ML</div>
<div style="left:960.06px;top:130px;font-size:11px;color:#000;transform:scaleX(0.9381);">Langmuir (Gerringa)</div>
<div style="left:1029.70px;top:500px;font-size:11px;color:#141414;transform:scaleX(0.9700);">MeFound</div>
<div style="left:350px;top:527px;width:461px;height:427px;background:#000"></div>
<div style="left:351px;top:528px;width:459px;height:425px;background:#fff"></div>
<div style="left:811px;top:530px;width:3px;height:427px;background:#707070"></div>
<div style="left:353px;top:954px;width:461px;height:3px;background:#707070"></div>
<div style="left:395px;top:547px;width:386px;height:1px;background:#000"></div>
<div style="left:400px;top:547px;width:1px;height:373px;background:#000"></div>
<div style="left:780px;top:547px;width:1px;height:373px;background:#000"></div>
<div style="left:395px;top:913px;width:386px;height:1px;background:#000"></div>
<div style="left:400px;top:913px;width:1px;height:7px;background:#000"></div>
<div style="left:395px;top:913px;width:6px;height:1px;background:#000"></div>
<div style="left:419px;top:913px;width:1px;height:4px;background:#000"></div>
<div style="left:397px;top:895px;width:4px;height:1px;background:#000"></div>
<div style="left:438px;top:913px;width:1px;height:4px;background:#000"></div>
<div style="left:397px;top:876px;width:4px;height:1px;background:#000"></div>
<div style="left:457px;top:913px;width:1px;height:4px;background:#000"></div>
<div style="left:397px;top:858px;width:4px;height:1px;background:#000"></div>
<div style="left:476px;top:913px;width:1px;height:7px;background:#000"></div>
<div style="left:395px;top:840px;width:6px;height:1px;background:#000"></div>
<div style="left:495px;top:913px;width:1px;height:4px;background:#000"></div>
<div style="left:397px;top:822px;width:4px;height:1px;background:#000"></div>
<div style="left:514px;top:913px;width:1px;height:4px;background:#000"></div>
<div style="left:397px;top:803px;width:4px;height:1px;background:#000"></div>
<div style="left:533px;top:913px;width:1px;height:4px;background:#000"></div>
<div style="left:397px;top:785px;width:4px;height:1px;background:#000"></div>
<div style="left:552px;top:913px;width:1px;height:7px;background:#000"></div>
<div style="left:395px;top:767px;width:6px;height:1px;background:#000"></div>
<div style="left:571px;top:913px;width:1px;height:4px;background:#000"></div>
<div style="left:397px;top:748px;width:4px;height:1px;background:#000"></div>
<div style="left:590px;top:913px;width:1px;height:4px;background:#000"></div>
<div style="left:397px;top:730px;width:4px;height:1px;background:#000"></div>
<div style="left:609px;top:913px;width:1px;height:4px;background:#000"></div>
<div style="left:397px;top:712px;width:4px;height:1px;background:#000"></div>
<div style="left:628px;top:913px;width:1px;height:7px;background:#000"></div>
<div style="left:395px;top:693px;width:6px;height:1px;background:#000"></div>
<div style="left:647px;top:913px;width:1px;height:4px;background:#000"></div>
<div style="left:397px;top:675px;width:4px;height:1px;background:#000"></div>
<div style="left:666px;top:913px;width:1px;height:4px;background:#000"></div>
<div style="left:397px;top:657px;width:4px;height:1px;background:#000"></div>
<div style="left:685px;top:913px;width:1px;height:4px;background:#000"></div>
<div style="left:397px;top:638px;width:4px;height:1px;background:#000"></div>
<div style="left:704px;top:913px;width:1px;height:7px;background:#000"></div>
<div style="left:395px;top:620px;width:6px;height:1px;background:#000"></div>
<div style="left:723px;top:913px;width:1px;height:4px;background:#000"></div>
<div style="left:397px;top:602px;width:4px;height:1px;background:#000"></div>
<div style="left:742px;top:913px;width:1px;height:4px;background:#000"></div>
<div style="left:397px;top:584px;width:4px;height:1px;background:#000"></div>
<div style="left:761px;top:913px;width:1px;height:4px;background:#000"></div>
<div style="left:397px;top:565px;width:4px;height:1px;background:#000"></div>
<div style="left:780px;top:913px;width:1px;height:7px;background:#000"></div>
<div style="left:395px;top:547px;width:6px;height:1px;background:#000"></div>
<div style="left:389.00px;top:917px;font-size:11px;color:#141414;">0.00</div>
<div style="left:370.00px;top:904px;font-size:11px;color:#141414;">0.00</div>
<div style="left:465.00px;top:917px;font-size:11px;color:#141414;">0.20</div>
<div style="left:370.00px;top:831px;font-size:11px;color:#141414;">0.20</div>
<div style="left:541.00px;top:917px;font-size:11px;color:#141414;">0.40</div>
<div style="left:370.00px;top:758px;font-size:11px;color:#141414;">0.40</div>
<div style="left:617.00px;top:917px;font-size:11px;color:#141414;">0.60</div>
<div style="left:370.00px;top:684px;font-size:11px;color:#141414;">0.60</div>
<div style="left:693.00px;top:917px;font-size:11px;color:#141414;">0.80</div>
<div style="left:370.00px;top:611px;font-size:11px;color:#141414;">0.80</div>
<div style="left:768.50px;top:917px;font-size:11px;color:#141414;">1.00</div>
<div style="left:370.00px;top:538px;font-size:11px;color:#141414;">1.00</div>
<div style="left:399.04px;top:528px;font-size:11px;color:#1c1c3c;transform:scaleX(0.9630);">Mfound/ML</div>
<div style="left:494.00px;top:528px;font-size:11px;color:#000;">Ruzic/van den Berg</div>
<div style="left:567.20px;top:932px;font-size:11px;color:#141414;transform:scaleX(0.9700);">MeFound</div>
<div style="left:814px;top:527px;width:458px;height:427px;background:#000"></div>
<div style="left:815px;top:528px;width:456px;height:425px;background:#fff"></div>
<div style="left:1272px;top:530px;width:3px;height:427px;background:#707070"></div>
<div style="left:817px;top:954px;width:458px;height:3px;background:#707070"></div>
<div style="left:859px;top:547px;width:383px;height:1px;background:#000"></div>
<div style="left:864px;top:547px;width:1px;height:373px;background:#000"></div>
<div style="left:1241px;top:547px;width:1px;height:373px;background:#000"></div>
<div style="left:859px;top:913px;width:383px;height:1px;background:#000"></div>
<div style="left:864px;top:913px;width:1px;height:7px;background:#000"></div>
<div style="left:859px;top:913px;width:6px;height:1px;background:#000"></div>
<div style="left:883px;top:913px;width:1px;height:4px;background:#000"></div>
<div style="left:861px;top:895px;width:4px;height:1px;background:#000"></div>
<div style="left:902px;top:913px;width:1px;height:4px;background:#000"></div>
<div style="left:861px;top:876px;width:4px;height:1px;background:#000"></div>
<div style="left:921px;top:913px;width:1px;height:4px;background:#000"></div>
<div style="left:861px;top:858px;width:4px;height:1px;background:#000"></div>
<div style="left:939px;top:913px;width:1px;height:7px;background:#000"></div>
<div style="left:859px;top:840px;width:6px;height:1px;background:#000"></div>
<div style="left:958px;top:913px;width:1px;height:4px;background:#000"></div>
<div style="left:861px;top:822px;width:4px;height:1px;background:#000"></div>
<div style="left:977px;top:913px;width:1px;height:4px;background:#000"></div>
<div style="left:861px;top:803px;width:4px;height:1px;background:#000"></div>
<div style="left:996px;top:913px;width:1px;height:4px;background:#000"></div>
<div style="left:861px;top:785px;width:4px;height:1px;background:#000"></div>
<div style="left:1015px;top:913px;width:1px;height:7px;background:#000"></div>
<div style="left:859px;top:767px;width:6px;height:1px;background:#000"></div>
<div style="left:1034px;top:913px;width:1px;height:4px;background:#000"></div>
<div style="left:861px;top:748px;width:4px;height:1px;background:#000"></div>
<div style="left:1052px;top:913px;width:1px;height:4px;background:#000"></div>
<div style="left:861px;top:730px;width:4px;height:1px;background:#000"></div>
<div style="left:1071px;top:913px;width:1px;height:4px;background:#000"></div>
<div style="left:861px;top:712px;width:4px;height:1px;background:#000"></div>
<div style="left:1090px;top:913px;width:1px;height:7px;background:#000"></div>
<div style="left:859px;top:693px;width:6px;height:1px;background:#000"></div>
<div style="left:1109px;top:913px;width:1px;height:4px;background:#000"></div>
<div style="left:861px;top:675px;width:4px;height:1px;background:#000"></div>
<div style="left:1128px;top:913px;width:1px;height:4px;background:#000"></div>
<div style="left:861px;top:657px;width:4px;height:1px;background:#000"></div>
<div style="left:1147px;top:913px;width:1px;height:4px;background:#000"></div>
<div style="left:861px;top:638px;width:4px;height:1px;background:#000"></div>
<div style="left:1166px;top:913px;width:1px;height:7px;background:#000"></div>
<div style="left:859px;top:620px;width:6px;height:1px;background:#000"></div>
<div style="left:1184px;top:913px;width:1px;height:4px;background:#000"></div>
<div style="left:861px;top:602px;width:4px;height:1px;background:#000"></div>
<div style="left:1203px;top:913px;width:1px;height:4px;background:#000"></div>
<div style="left:861px;top:584px;width:4px;height:1px;background:#000"></div>
<div style="left:1222px;top:913px;width:1px;height:4px;background:#000"></div>
<div style="left:861px;top:565px;width:4px;height:1px;background:#000"></div>
<div style="left:1241px;top:913px;width:1px;height:7px;background:#000"></div>
<div style="left:859px;top:547px;width:6px;height:1px;background:#000"></div>
<div style="left:853.00px;top:917px;font-size:11px;color:#141414;">0.00</div>
<div style="left:834.00px;top:904px;font-size:11px;color:#141414;">0.00</div>
<div style="left:928.00px;top:917px;font-size:11px;color:#141414;">0.20</div>
<div style="left:834.00px;top:831px;font-size:11px;color:#141414;">0.20</div>
<div style="left:1004.00px;top:917px;font-size:11px;color:#141414;">0.40</div>
<div style="left:834.00px;top:758px;font-size:11px;color:#141414;">0.40</div>
<div style="left:1079.00px;top:917px;font-size:11px;color:#141414;">0.60</div>
<div style="left:834.00px;top:684px;font-size:11px;color:#141414;">0.60</div>
<div style="left:1155.00px;top:917px;font-size:11px;color:#141414;">0.80</div>
<div style="left:834.00px;top:611px;font-size:11px;color:#141414;">0.80</div>
<div style="left:1229.50px;top:917px;font-size:11px;color:#141414;">1.00</div>
<div style="left:834.00px;top:538px;font-size:11px;color:#141414;">1.00</div>
<div style="left:863.04px;top:528px;font-size:11px;color:#1c1c3c;transform:scaleX(0.9630);">ML/Mfound</div>
<div style="left:1003.00px;top:528px;font-size:11px;color:#000;">Scatchard</div>
<div style="left:1044.74px;top:932px;font-size:11px;color:#141414;transform:scaleX(0.9700);">ML</div>
<div style="left:0px;top:961px;width:1280px;height:24px;background:#f0f0f0"></div>
<div style="left:0px;top:961px;width:1280px;height:1px;background:#ffffff"></div>
<div style="left:0px;top:983px;width:1280px;height:2px;background:#a0a0a0"></div>
<div style="left:1279px;top:961px;width:1px;height:24px;background:#a0a0a0"></div>
<div style="left:559.00px;top:963px;font-size:14px;font-weight:bold;color:#000;transform:scaleX(1.0188);">X = 4,18E-1,  Y = 8,13E-1</div>
</body></html>
